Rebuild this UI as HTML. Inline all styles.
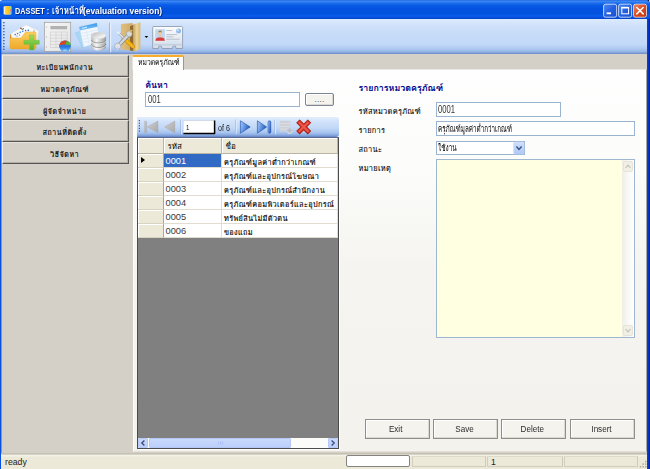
<!DOCTYPE html>
<html lang="th">
<head>
<meta charset="utf-8">
<title>DASSET</title>
<style>
html,body{margin:0;padding:0;}
body{width:650px;height:469px;overflow:hidden;position:relative;background:#d4d0c8;
 font-family:"Liberation Sans","Loma","Tahoma",sans-serif;font-size:9px;color:#000;}
.abs{position:absolute;}
#frame{left:0;top:0;width:650px;height:469px;background:linear-gradient(to right,#0a50dc 0,#0a50dc 640px,#0a44d4 647px,#0530bc 649px,#00189c 650px);}
#title{left:0;top:0;width:650px;height:19px;
 background:linear-gradient(to bottom,#1e62dc 0,#3f8cf6 6%,#2274ee 14%,#0a5ce6 26%,#0353e0 45%,#0252de 70%,#0a5cea 84%,#0650dc 93%,#0440c4 100%);}
#ttext{left:15.4px;top:3.5px;height:14px;line-height:14px;color:#fff;font-weight:bold;font-size:9.3px;white-space:nowrap;text-shadow:1px 1px 0 #0a2a80;}
#ttext span{position:absolute;top:0;transform-origin:0 50%;}
#t1{left:-0.5px;transform:scaleX(0.785);}
#t2{left:36.3px;transform:scaleX(0.85);}
#t3{left:67.7px;transform:scaleX(0.9);}
#toolbar{left:1px;top:19px;width:646px;height:35px;
 background:linear-gradient(to bottom,#dceafc 0,#cfe1fa 20%,#c6dbf8 45%,#c3d9f8 72%,#b0caf1 84%,#97b6e8 93%,#7f9ed6 97%,#6c8bc4 100%);}
#client{left:1px;top:54px;width:646px;height:400px;background:#d4d0c8;}
.lbtn{left:2px;width:127px;box-sizing:border-box;background:#d5d1c9;border:1px solid;border-color:#e6e3dc #565450 #565450 #f4f2ec;box-shadow:inset -1px -1px 0 #b4b0a8;text-align:center;padding-right:2px;font-weight:bold;font-size:7.6px;letter-spacing:0.22px;color:#1a1a1a;white-space:nowrap;}
#tabpage{left:133px;top:69px;width:514px;height:383px;box-sizing:border-box;border:1px solid #a4a8a4;border-top-color:#e9e8e4;border-left-color:#fdfdfb;border-bottom-color:#e2e0d8;
 background:linear-gradient(to bottom,#fefefe 0,#fcfcfb 25%,#f8f8f5 40%,#f5f4f0 52%,#f3f2ed 100%);}
#tab{left:132px;top:55px;width:52px;height:15px;box-sizing:border-box;background:#fdfdfd;border:1px solid #919b9c;border-left-color:#e4e3de;border-bottom:none;border-top:2px solid #f7ae2c;border-radius:2px 2px 0 0;
 font-size:8px;line-height:11.5px;text-align:left;padding-left:4.600px;white-space:nowrap;}
.nav{color:#00008b;font-weight:bold;white-space:nowrap;}
.lab{white-space:nowrap;font-size:7.4px;letter-spacing:0.3px;color:#000;-webkit-text-stroke:0.1px #333;}
.inp{box-sizing:border-box;border:1px solid #9ab3ce;background:#fff;font-size:9px;line-height:12px;padding-left:2px;color:#333;white-space:nowrap;overflow:hidden;}
.btn{box-sizing:border-box;border:1px solid #8e8e8a;background:#f4f3ee;box-shadow:inset -1px -1px 0 #dcdad0, inset 1px 1px 0 #fff;text-align:center;font-size:9.2px;color:#2a2a2a;line-height:19.5px;height:20px;top:419px;width:65px;padding-right:3px;}
.btn span{display:inline-block;transform:scaleX(0.88);}
#status{left:1px;top:453px;width:646px;height:16px;background:linear-gradient(to bottom,#c4c1b3 0,#c4c1b3 1px,#d6d3c5 1px,#d6d3c5 2px,#f3f2e9 2px,#f3f2e9 3px,#efede0 3px,#efede0 4px,#ece9d8 4px,#ece9d8 100%);}
.sp{top:456px;height:11px;box-sizing:border-box;border:1px solid;border-color:#dedbca #cdcab9 #d0cdbc #d2cfbe;}

#navbar{left:137px;top:117px;width:202px;height:20px;border-radius:0 3px 3px 0;
 background:linear-gradient(to bottom,#e2edfc 0,#d0e1fa 25%,#c2d8f7 55%,#a9c5ef 78%,#8aabe2 90%,#6c8ed0 97%,#5c7ec4 100%);}
#grid{left:137px;top:137px;width:202px;height:312px;box-sizing:border-box;background:#808080;border:1px solid #4c4c4c;border-top-color:#5c6a8c;box-shadow:1px 1px 0 #fff;}
.gh{box-sizing:border-box;background:#ece9d8;border-right:1px solid #b8b5a4;border-bottom:1px solid #b8b5a4;box-shadow:inset 1px 1px 0 #fff;font-size:8px;line-height:17px;padding-left:3.5px;white-space:nowrap;overflow:hidden;}
.gr{box-sizing:border-box;background:#ece9d8;border-right:1px solid #aca899;border-bottom:1px solid #d8d4c2;box-shadow:inset 1px 1px 0 #fff;}
.gr i{position:absolute;left:3px;top:3px;width:0;height:0;border-left:4px solid #000;border-top:3.5px solid transparent;border-bottom:3.5px solid transparent;}
.gc{box-sizing:border-box;background:#fff;border-right:1px solid #e0ddd0;border-bottom:1px solid #e0ddd0;padding-left:2px;color:#3a3a3a;white-space:nowrap;overflow:hidden;}
.gc.sel{background:#316ac5;color:#fff;}
.sbb{box-sizing:border-box;background:linear-gradient(to bottom,#c9d9fc,#bccffa);border:1px solid #b4c8f6;border-radius:1px;}
.sbd{box-sizing:border-box;background:#f1efe6;border:1px solid #e6e4d8;border-radius:2px;}
.sx{display:inline-block;transform-origin:0 50%;white-space:nowrap;}
</style>
</head>
<body>
<div id="frame" class="abs"></div>
<div id="title" class="abs"></div>
<div id="ttext" class="abs"><span class="sx" id="t1">DASSET : </span><span class="sx" id="t2">เจ้าหน้าที่</span><span class="sx" id="t3">(evaluation version)</span></div>

<svg class="abs" style="left:0;top:0" width="650" height="19" viewBox="0 0 650 19">
<defs>
<linearGradient id="gWb" x1="0" y1="0" x2="1" y2="1"><stop offset="0" stop-color="#4c8af4"/><stop offset="0.5" stop-color="#2560e2"/><stop offset="1" stop-color="#1c50cc"/></linearGradient>
<linearGradient id="gWc" x1="0" y1="0" x2="1" y2="1"><stop offset="0" stop-color="#ee8a68"/><stop offset="0.5" stop-color="#dc4c22"/><stop offset="1" stop-color="#b8360e"/></linearGradient>
<linearGradient id="gApp" x1="0" y1="0" x2="1" y2="0"><stop offset="0" stop-color="#ffd840"/><stop offset="1" stop-color="#f4b818"/></linearGradient>
<filter id="b4"><feGaussianBlur stdDeviation="0.3"/></filter>
</defs>
<g filter="url(#b4)">
<rect x="3.600" y="6.200" width="7.800" height="8.200" rx="0.700" fill="#f6ecc8"/><rect x="5" y="6.200" width="5.200" height="8.200" fill="url(#gApp)"/><rect x="10.200" y="6.800" width="1.200" height="2.200" fill="#8cd060"/><rect x="10.200" y="9.200" width="1.200" height="2.200" fill="#e06a40"/><rect x="10.200" y="11.600" width="1.200" height="2.200" fill="#6aa8e8"/>
<rect x="0" y="0" width="1.400" height="1" fill="#e8eefc"/><rect x="647.800" y="0" width="1.300" height="1.300" fill="#0a1430"/><rect x="649" y="0" width="1" height="1.600" fill="#d0d0c8"/>
<rect x="603.6" y="4.2" width="13" height="13" rx="1.8" fill="url(#gWb)" stroke="#e6eefc" stroke-width="0.8"/>
<rect x="606.6" y="12.4" width="4.4" height="1.8" fill="#fff"/>
<rect x="618.6" y="4.2" width="13" height="13" rx="1.8" fill="url(#gWb)" stroke="#e6eefc" stroke-width="0.8"/>
<rect x="621.8" y="7.4" width="6.8" height="6.4" fill="none" stroke="#fff" stroke-width="1"/><rect x="621.3" y="6.9" width="7.8" height="1.6" fill="#fff"/>
<rect x="633.5" y="4.2" width="13" height="13" rx="1.8" fill="url(#gWc)" stroke="#f4e4dc" stroke-width="0.8"/>
<path d="M636.8 7.5 l6.4 6.4 M643.2 7.5 l-6.400000000000091 6.4" stroke="#fff" stroke-width="1.5" stroke-linecap="round"/>
</g>
</svg>
<div id="toolbar" class="abs"></div>
<div id="client" class="abs"></div>
<div class="abs" style="left:1px;top:19px;width:1px;height:450px;background:rgba(10,80,220,0.45)"></div>

<svg class="abs" style="left:0;top:0" width="650" height="60" viewBox="0 0 650 60">
<defs>
 <linearGradient id="gFold" x1="0" y1="0" x2="0" y2="1"><stop offset="0" stop-color="#fcd063"/><stop offset="1" stop-color="#eea92a"/></linearGradient>
 <linearGradient id="gPlus" x1="0" y1="0" x2="0" y2="1"><stop offset="0" stop-color="#9be05a"/><stop offset="1" stop-color="#4fb22a"/></linearGradient>
 <linearGradient id="gSheet" x1="0" y1="0" x2="1" y2="1"><stop offset="0" stop-color="#f6f6f6"/><stop offset="1" stop-color="#e4e4e4"/></linearGradient>
 <linearGradient id="gDb" x1="0" y1="0" x2="1" y2="0"><stop offset="0" stop-color="#b8b8b8"/><stop offset="0.35" stop-color="#f6f6f6"/><stop offset="1" stop-color="#9a9a9a"/></linearGradient>
 <linearGradient id="gDbTop" x1="0" y1="0" x2="1" y2="1"><stop offset="0" stop-color="#b4b4b4"/><stop offset="0.6" stop-color="#e8e8e8"/><stop offset="1" stop-color="#ffffff"/></linearGradient>
 <linearGradient id="gTan" x1="0" y1="0" x2="1" y2="0"><stop offset="0" stop-color="#e0c080"/><stop offset="1" stop-color="#cfa860"/></linearGradient>
 <linearGradient id="gTan2" x1="0" y1="0" x2="1" y2="0"><stop offset="0" stop-color="#c9a25a"/><stop offset="0.5" stop-color="#ecd49a"/><stop offset="1" stop-color="#d8b670"/></linearGradient>
 <linearGradient id="gBlueTop" x1="0" y1="0" x2="0" y2="1"><stop offset="0" stop-color="#3a98ec"/><stop offset="1" stop-color="#80c6f8"/></linearGradient>
 <linearGradient id="gPie" x1="0" y1="0" x2="0" y2="1"><stop offset="0" stop-color="#2a6fd0"/><stop offset="0.5" stop-color="#2672dc"/><stop offset="1" stop-color="#6cbcfa"/></linearGradient>
 <linearGradient id="gCard" x1="0" y1="0" x2="0" y2="1"><stop offset="0" stop-color="#fbfcfd"/><stop offset="1" stop-color="#d5dde8"/></linearGradient>
 <filter id="b3"><feGaussianBlur stdDeviation="0.35"/></filter>
</defs>
<g filter="url(#b3)">
<!-- grip -->
<g fill="#2c4f9e">
<rect x="3.2" y="22" width="1.3" height="1.3"/><rect x="3.2" y="25" width="1.3" height="1.3"/><rect x="3.2" y="28" width="1.3" height="1.3"/><rect x="3.2" y="31" width="1.3" height="1.3"/><rect x="3.2" y="34" width="1.3" height="1.3"/><rect x="3.2" y="37" width="1.3" height="1.3"/><rect x="3.2" y="40" width="1.3" height="1.3"/><rect x="3.2" y="43" width="1.3" height="1.3"/><rect x="3.2" y="46" width="1.3" height="1.3"/><rect x="3.2" y="48.6" width="1.3" height="1.3"/>
</g>
<!-- icon 1: folder plus -->
<polygon points="10,34.6 11.6,33.6 12,39 10,39" fill="#d88a1a"/><polygon points="10.8,33.8 25.9,25 38.6,30.8 37.4,40 12,40" fill="#f8f8f8" stroke="#dcdcdc" stroke-width="0.4"/><polygon points="19,29.4 26.4,25.6 31,27.6 24,31.6" fill="#fff"/>
<g fill="#2f78d8"><circle cx="15.2" cy="34.6" r="0.8"/><circle cx="17.6" cy="33.5" r="0.8"/><circle cx="20.2" cy="32.3" r="0.8"/><circle cx="22.8" cy="31.3" r="0.8"/><circle cx="25.600" cy="30.6" r="0.8"/><circle cx="28.3" cy="30.4" r="0.8"/><circle cx="17" cy="36" r="0.6"/><circle cx="19.6" cy="35" r="0.6"/></g><circle cx="34" cy="31" r="0.7" fill="#8a8f98"/>
<path d="M20.2 28.2 l2.6 1.2 l1.2 -1" stroke="#3a3a3a" stroke-width="0.9" fill="none"/><path d="M20.400 28 l1.2 0.400" stroke="#c83a2a" stroke-width="0.8"/>
<path d="M10 39.4 q0 -1.400 1.400 -1.400 h9.600 l4.600 -6 h9.100 q1.400 0 1.400 1.400 v14.200 q0 1.400 -1.400 1.400 h-23.300 q-1.400 0 -1.400 -1.400 z" fill="url(#gFold)" stroke="#e8a020" stroke-width="0.4"/>
<path d="M29.600 34.900 h4.300 v5.400 h5.400 v4 h-5.400 v5.700 h-4.300 v-5.700 h-5.700 v-4 h5.700 z" fill="url(#gPlus)" stroke="#62b838" stroke-width="0.4" opacity="0.95"/>
<!-- icon 2: sheet + pie -->
<rect x="44.4" y="22.3" width="26.3" height="29" fill="url(#gSheet)" stroke="#9c9c9c" stroke-width="0.7"/>
<rect x="50.4" y="26" width="16.7" height="3.3" fill="#b2b2b2"/>
<g stroke="#c4c4c4" stroke-width="0.5" fill="none">
<rect x="50.4" y="32" width="16.7" height="15.5"/>
<path d="M50.4 35.1 h16.7 M50.4 38.2 h16.7 M50.4 41.3 h16.7 M50.4 44.4 h16.7 M56 32 v15.5 M61.5 32 v15.5"/>
</g>
<circle cx="46.6" cy="27" r="0.5" fill="#999"/><circle cx="46.6" cy="37" r="0.5" fill="#999"/><circle cx="46.6" cy="47" r="0.5" fill="#999"/>
<circle cx="65" cy="46.2" r="5.8" fill="url(#gPie)"/>
<path d="M65 45.4 L59.260 45.4 A5.8 5.8 0 0 1 67 40.76 z" fill="#d6442a"/>
<path d="M64.6 45.4 L67 40.76 A5.8 5.8 0 0 1 70.740 45.4 z" fill="#52b82c"/>
<ellipse cx="65" cy="46" rx="5.8" ry="1.5" fill="#2a74e0"/><ellipse cx="65" cy="50.300" rx="2.2" ry="0.8" fill="#c8e8ff" opacity="0.7"/>
<!-- icon 3: sheets + db -->
<polygon points="75.5,33 90,28 96,44 82.600,48" fill="#a8d8f6" stroke="#8cc0e8" stroke-width="0.4"/>
<polygon points="79.1,26.9 96.8,23 100.4,42 83.6,47.2" fill="#f0f6fc" stroke="#b4cee8" stroke-width="0.4"/>
<polygon points="79.1,26.9 96.8,23 97.5,26.700 79.9,30.600" fill="url(#gBlueTop)"/><path d="M82 28.300 l5 -1.100" stroke="#e8f4fe" stroke-width="0.9"/>
<path d="M81.5 33.400 l16 -3.500 M82.200 36.400 l16 -3.500 M82.900 39.400 l16 -3.500 M83.600 42.400 l16 -3.500 M86.400 31 l2.800 14 M91.400 30 l2.800 14" stroke="#d0e0f0" stroke-width="0.45"/>
<path d="M91.300 35.500 v11.800 a7.300 3.200 0 0 0 14.600 0 v-11.800 z" fill="url(#gDb)"/>
<ellipse cx="98.600" cy="35.500" rx="7.300" ry="3.200" fill="url(#gDbTop)" stroke="#d8d8d8" stroke-width="0.5"/>
<path d="M91.300 39.800 a7.300 3.200 0 0 0 14.600 0 M91.300 44.300 a7.300 3.200 0 0 0 14.600 0" stroke="#7e7e7e" stroke-width="0.8" fill="none"/><path d="M91.300 40.700 a7.300 3.200 0 0 0 14.600 0 M91.300 45.200 a7.300 3.200 0 0 0 14.600 0" stroke="#fbfbfb" stroke-width="0.6" fill="none" opacity="0.8"/>
<!-- separator -->
<rect x="109.3" y="22.600" width="0.8" height="29.600" fill="#88a4dc"/><rect x="110.2" y="22.600" width="0.9" height="29.600" fill="#f2f6fd"/>
<!-- icon 4: folder + tools -->
<polygon points="120.9,24 132.5,22.900 132.5,50.400 120.9,49.400" fill="url(#gTan)"/>
<polygon points="130,26.500 133.600,24.600 133.600,51 130,50.400" fill="#8c6a30"/>
<polygon points="133.100,24.700 140.400,22.200 140.400,49 133.100,51.900" fill="url(#gTan2)"/>
<path d="M118.400 32.800 L126 40.200" stroke="#8a9098" stroke-width="2.300" stroke-linecap="round"/><path d="M118.400 32.800 L126 40.200" stroke="#e4e7ea" stroke-width="1.400" stroke-linecap="round"/><circle cx="118.300" cy="32.600" r="1.300" fill="#f4f5f6"/>
<path d="M126.200 40.400 L133 46.600" stroke="#c88408" stroke-width="4" stroke-linecap="round"/><path d="M126.200 40.400 L133 46.600" stroke="#f4b414" stroke-width="2.800" stroke-linecap="round"/>
<path d="M118 46 L129 34.400" stroke="#7c848e" stroke-width="3.600" stroke-linecap="round"/><path d="M118 46 L129 34.400" stroke="#d4d8dd" stroke-width="2.500" stroke-linecap="round"/>
<circle cx="129.300" cy="33.800" r="2.900" fill="#d8dce0" stroke="#8a929c" stroke-width="0.500"/><polygon points="129.500,33.400 133,30.400 130.600,29.400" fill="#d9ba78"/>
<circle cx="117.700" cy="46.200" r="3.100" fill="#dfe2e6" stroke="#8a929c" stroke-width="0.500"/><polygon points="117.600,46.800 115.200,50.400 118.600,50.400" fill="#b4ccf0"/>
<!-- dropdown arrow -->
<polygon points="144.6,36 148.2,36 146.4,38" fill="#000"/>
<!-- icon 5: id card -->
<path d="M153.800 26.500 h27.700 q1.100 0 1.100 1.100 v20.900 h-6.600 l-0.600 -2.600 h-2.200 l-0.800 2.600 h-10.400 l-0.800 -2.600 h-2.200 l-0.600 2.600 h-5.700 v-20.900 q0 -1.100 1.100 -1.100 z" fill="url(#gCard)" stroke="#8794a8" stroke-width="0.800"/>
<rect x="155.200" y="29.200" width="9.700" height="11.600" fill="#bfd8f2"/>
<ellipse cx="160.100" cy="33.400" rx="1.900" ry="2.300" fill="#edc9a0"/><rect x="159.400" y="35.200" width="1.400" height="2.600" fill="#e8c096"/>
<path d="M158.300 32.600 q0 -2.200 1.800 -2.200 q1.800 0 1.800 2.200 q-1.800 -1 -3.600 0z" fill="#a87c44"/>
<path d="M155.400 40.800 q0.200 -3.200 3.400 -3.300 h2.600 q3.200 0.100 3.400 3.300 z" fill="#dc3a36"/>
<g stroke="#9aa2b0" stroke-width="0.700" opacity="0.85"><path d="M166.400 30.500 h5.800 M166.400 34.600 h10.600 M166.400 36.800 h7 M166.400 39.200 h13.400"/></g><path d="M167 42 h13" stroke="#d4e2f2" stroke-width="1.200"/>
<circle cx="178.600" cy="30.900" r="2.500" fill="#8ebcec"/><circle cx="178" cy="30.300" r="1" fill="#cfe4f8"/>
<rect x="154.200" y="43.800" width="28" height="1.700" fill="#c2d0e2"/>
</g>
</svg>


<div class="abs lbtn" style="top:55px;height:22px;line-height:24px">ทะเบียนพนักงาน</div>
<div class="abs lbtn" style="top:77px;height:22px;line-height:24px">หมวดครุภัณฑ์</div>
<div class="abs lbtn" style="top:99px;height:21px;line-height:23px">ผู้จัดจำหน่าย</div>
<div class="abs lbtn" style="top:120px;height:22px;line-height:24px">สถานที่ติดตั้ง</div>
<div class="abs lbtn" style="top:142px;height:22px;line-height:24px">วิธีจัดหา</div>

<div id="tabpage" class="abs"></div>
<div id="tab" class="abs"><span class="sx" style="transform:scaleX(0.845)">หมวดครุภัณฑ์</span></div>

<div class="abs nav" style="left:145.2px;top:79px;font-size:8.8px;line-height:12px">ค้นหา</div>
<div class="abs inp" style="left:145px;top:92px;width:155px;height:15px;line-height:13.5px;font-size:10.2px;padding-left:1.5px"><span class="sx" style="transform:scaleX(0.75)">001</span></div>
<div class="abs btn" style="left:305px;top:93px;width:29px;height:13px;line-height:12px;border-radius:2px;border-color:#7a8698;font-size:8px;letter-spacing:0.3px;color:#333;padding-right:0">....</div>

<div class="abs nav" style="left:358.5px;top:82px;font-size:8.9px;line-height:12px">รายการหมวดครุภัณฑ์</div>
<div class="abs lab" style="left:358.5px;top:105.5px;line-height:12px">รหัสหมวดครุภัณฑ์</div>
<div class="abs lab" style="left:358.5px;top:124.5px;line-height:12px">รายการ</div>
<div class="abs lab" style="left:358.5px;top:143.5px;line-height:12px">สถานะ</div>
<div class="abs lab" style="left:358.5px;top:162.5px;line-height:12px">หมายเหตุ</div>
<div class="abs inp" style="left:436px;top:102px;width:125px;height:15px;line-height:13.5px;font-size:10.2px;padding-left:1px"><span class="sx" style="transform:scaleX(0.75)">0001</span></div>
<div class="abs inp" style="left:436px;top:121px;width:199px;height:15px;line-height:14px;font-size:9.2px;color:#000;padding-left:1px"><span class="sx" style="transform:scaleX(0.685)">ครุภัณฑ์มูลค่าต่ำกว่าเกณฑ์</span></div>
<div class="abs inp" style="left:436px;top:141px;width:89px;height:14px;line-height:13px;font-size:9.2px;color:#000;padding-left:1px"><span class="sx" style="transform:scaleX(0.7)">ใช้งาน</span></div>
<div class="abs inp" style="left:436px;top:159px;width:199px;height:179px;background:#ffffe1;border-color:#9fb6d0"></div>

<div id="navbar" class="abs"></div>
<svg class="abs" style="left:130px;top:110px" width="220" height="30" viewBox="130 110 220 30">
<defs>
<linearGradient id="gNb" x1="0" y1="0.2" x2="1" y2="0.6"><stop offset="0" stop-color="#a4c4f2"/><stop offset="0.45" stop-color="#6496e2"/><stop offset="1" stop-color="#1c4cac"/></linearGradient>
<linearGradient id="gGr" x1="0" y1="0" x2="1" y2="1"><stop offset="0" stop-color="#d0d0d0"/><stop offset="1" stop-color="#a8a8a8"/></linearGradient>
<linearGradient id="gRx" x1="0" y1="0" x2="0" y2="1"><stop offset="0" stop-color="#f06a5a"/><stop offset="1" stop-color="#c8201c"/></linearGradient>
<filter id="b5"><feGaussianBlur stdDeviation="0.3"/></filter>
</defs>
<g filter="url(#b5)">
<g fill="#3b5aa6"><rect x="138.8" y="120" width="1.2" height="1.2"/><rect x="138.8" y="122.6" width="1.2" height="1.2"/><rect x="138.8" y="125.2" width="1.2" height="1.2"/><rect x="138.8" y="127.8" width="1.2" height="1.2"/><rect x="138.8" y="130.4" width="1.2" height="1.2"/></g>
<rect x="144.4" y="121" width="2.2" height="11.8" rx="0.8" fill="url(#gGr)" stroke="#a0a0a0" stroke-width="0.3"/>
<polygon points="158,121 158,132.8 147.2,127" fill="url(#gGr)" stroke="#a4a4a4" stroke-width="0.4"/>
<polygon points="174.8,121 174.8,132.8 164.6,127" fill="url(#gGr)" stroke="#a4a4a4" stroke-width="0.4"/>
<rect x="180.4" y="119.6" width="0.8" height="14.6" fill="#8fafe0"/><rect x="181.2" y="119.6" width="0.7" height="14.6" fill="#eef4fd"/>
<rect x="235" y="119.6" width="0.8" height="14.6" fill="#8fafe0"/><rect x="235.8" y="119.6" width="0.7" height="14.6" fill="#eef4fd"/>
<polygon points="240.4,120.8 240.4,133.2 250.2,127" fill="url(#gNb)" stroke="#2c5cb4" stroke-width="0.7" stroke-linejoin="round"/>
<polygon points="257.4,120.8 257.4,133.2 266.6,127" fill="url(#gNb)" stroke="#2c5cb4" stroke-width="0.7" stroke-linejoin="round"/>
<rect x="268" y="120.8" width="2.8" height="12.4" rx="1.2" fill="url(#gNb)" stroke="#2c5cb4" stroke-width="0.6"/>
<rect x="274.5" y="119.6" width="0.8" height="14.6" fill="#8fafe0"/><rect x="275.3" y="119.6" width="0.7" height="14.6" fill="#eef4fd"/>
<rect x="279.8" y="120.8" width="10.6" height="11" fill="#cdd1d7"/><path d="M279.8 123.6 h10.6 M279.8 126.4 h10.6 M279.8 129.2 h10.6" stroke="#e2e6ec" stroke-width="0.6"/>
<path d="M289.6 127.2 v6.8 M286.2 130.6 h6.8" stroke="#d8e4f6" stroke-width="3.4"/><path d="M289.6 127.6 v6 M286.6 130.6 h6" stroke="#b9bec6" stroke-width="2"/>
<path d="M299.6 122.8 L307.8 131 M307.8 122.800 L299.6 131" stroke="#a01810" stroke-width="4.8" stroke-linecap="square"/>
<path d="M299.6 122.8 L307.8 131 M307.8 122.800 L299.6 131" stroke="#d63428" stroke-width="3.7" stroke-linecap="square"/>
<path d="M299.6 122.8 L307.8 131 M307.8 122.800 L299.6 131" stroke="#ea5a4c" stroke-width="1.8" stroke-linecap="square"/>
</g>
</svg>
<svg class="abs" style="left:180px;top:118px" width="40" height="20" viewBox="180 118 40 20"><rect x="183" y="120.2" width="32" height="13.6" fill="#fff"/><path d="M183.300 134 V120.5 H215" stroke="#b8c4d8" stroke-width="0.6" fill="none"/><path d="M183.400 133.6 H214.6 V120.6" stroke="#000" stroke-width="1.5" fill="none" stroke-linejoin="round"/></svg>
<div class="abs" style="left:185.500px;top:121.500px;font-size:7.6px;line-height:12px;color:#111"><span class="sx" style="transform:scaleX(0.8)">1</span></div>
<div class="abs" style="left:218px;top:121.5px;font-size:8.3px;line-height:12px;color:#222"><span class="sx" style="transform:scaleX(0.86)">of 6</span></div>
<div id="grid" class="abs"></div>
<div class="abs gh" style="left:138px;top:138px;width:26px;height:16px"></div>
<div class="abs gh" style="left:164px;top:138px;width:58px;height:16px"><span>รหัส</span></div>
<div class="abs gh" style="left:222px;top:138px;width:116px;height:16px"><span>ชื่อ</span></div>
<!--ROWS-->
<div class="abs gr" style="left:138px;top:154px;width:26px;height:14px"><i></i></div>
<div class="abs gc sel" style="left:164px;top:154px;width:58px;height:14px;line-height:14px;font-size:9.3px;padding-left:1.5px">0001</div>
<div class="abs gc" style="left:222px;top:154px;width:116px;height:14px;line-height:17px;font-size:7.3px;letter-spacing:0.36px;-webkit-text-stroke:0.15px #222;color:#000;padding-left:2px">ครุภัณฑ์มูลค่าต่ำกว่าเกณฑ์</div>
<div class="abs gr" style="left:138px;top:168px;width:26px;height:14px"></div>
<div class="abs gc" style="left:164px;top:168px;width:58px;height:14px;line-height:14px;font-size:9.3px;padding-left:1.5px">0002</div>
<div class="abs gc" style="left:222px;top:168px;width:116px;height:14px;line-height:17px;font-size:7.3px;letter-spacing:0.36px;-webkit-text-stroke:0.15px #222;color:#000;padding-left:2px">ครุภัณฑ์และอุปกรณ์โฆษณา</div>
<div class="abs gr" style="left:138px;top:182px;width:26px;height:14px"></div>
<div class="abs gc" style="left:164px;top:182px;width:58px;height:14px;line-height:14px;font-size:9.3px;padding-left:1.5px">0003</div>
<div class="abs gc" style="left:222px;top:182px;width:116px;height:14px;line-height:17px;font-size:7.3px;letter-spacing:0.36px;-webkit-text-stroke:0.15px #222;color:#000;padding-left:2px">ครุภัณฑ์และอุปกรณ์สำนักงาน</div>
<div class="abs gr" style="left:138px;top:196px;width:26px;height:14px"></div>
<div class="abs gc" style="left:164px;top:196px;width:58px;height:14px;line-height:14px;font-size:9.3px;padding-left:1.5px">0004</div>
<div class="abs gc" style="left:222px;top:196px;width:116px;height:14px;line-height:17px;font-size:7.3px;letter-spacing:0.36px;-webkit-text-stroke:0.15px #222;color:#000;padding-left:2px">ครุภัณฑ์คอมพิวเตอร์และอุปกรณ์</div>
<div class="abs gr" style="left:138px;top:210px;width:26px;height:14px"></div>
<div class="abs gc" style="left:164px;top:210px;width:58px;height:14px;line-height:14px;font-size:9.3px;padding-left:1.5px">0005</div>
<div class="abs gc" style="left:222px;top:210px;width:116px;height:14px;line-height:17px;font-size:7.3px;letter-spacing:0.36px;-webkit-text-stroke:0.15px #222;color:#000;padding-left:2px">ทรัพย์สินไม่มีตัวตน</div>
<div class="abs gr" style="left:138px;top:224px;width:26px;height:14px"></div>
<div class="abs gc" style="left:164px;top:224px;width:58px;height:14px;line-height:14px;font-size:9.3px;padding-left:1.5px">0006</div>
<div class="abs gc" style="left:222px;top:224px;width:116px;height:14px;line-height:17px;font-size:7.3px;letter-spacing:0.36px;-webkit-text-stroke:0.15px #222;color:#000;padding-left:2px">ของแถม</div>
<!--/ROWS-->
<div class="abs" style="left:138px;top:438px;width:200px;height:10px;background:#fbfbf9"></div>
<div class="abs sbb" style="left:138px;top:438px;width:10px;height:10px"></div>
<div class="abs sbb" style="left:328px;top:438px;width:10px;height:10px"></div>
<div class="abs sbb" style="left:149px;top:438px;width:142px;height:10px"></div>
<svg class="abs" style="left:138px;top:438px" width="200" height="10" viewBox="0 0 200 10"><path d="M6.4 2.4 L3.8 5 L6.4 7.6 M193.6 2.4 L196.2 5 L193.6 7.6" stroke="#3d4f80" stroke-width="1.4" fill="none"/><path d="M80.500 3.5 v3 M82.500 3.5 v3 M84.500 3.5 v3" stroke="#9cb8f0" stroke-width="0.7"/></svg>
<div class="abs" style="left:622px;top:160px;width:12px;height:177px;background:linear-gradient(to right,#efeee8,#fafaf8 60%,#fefefe)"></div>
<div class="abs sbd" style="left:623px;top:161px;width:10px;height:11px"></div>
<div class="abs sbd" style="left:623px;top:325px;width:10px;height:11px"></div>
<svg class="abs" style="left:623px;top:161px" width="10" height="176" viewBox="0 0 10 176"><path d="M2.6 6.8 L5 4.2 L7.4 6.8 M2.6 168.2 L5 170.8 L7.4 168.2" stroke="#c4c2b6" stroke-width="1.2" fill="none"/></svg>
<div class="abs" style="left:514px;top:142px;width:10px;height:12px;border-radius:1.5px;background:linear-gradient(to bottom,#cfe0fc,#b0c8f6);box-shadow:0 0 0 0.5px #b4c8ee"></div>
<svg class="abs" style="left:514px;top:142px" width="10" height="12" viewBox="0 0 10 12"><path d="M2.4 4.6 L5 7.4 L7.6 4.6" stroke="#3a5488" stroke-width="1.5" fill="none"/></svg>
<div class="abs btn" style="left:365px"><span>Exit</span></div>
<div class="abs btn" style="left:433px"><span>Save</span></div>
<div class="abs btn" style="left:501px"><span>Delete</span></div>
<div class="abs btn" style="left:570px"><span>Insert</span></div>

<div id="status" class="abs"></div>
<div class="abs" style="left:5px;top:457px;font-size:8.7px;line-height:11px;color:#1a1a1a">ready</div>
<div class="abs" style="left:491px;top:457px;font-size:8.6px;line-height:11px;color:#222">1</div>

<div class="abs" style="left:346px;top:455px;width:64px;height:12px;box-sizing:border-box;border:1px solid #848484;border-radius:2px;background:#fff"></div>
<div class="abs sp" style="left:412px;width:74px"></div>
<div class="abs sp" style="left:487px;width:76px"></div>
<div class="abs sp" style="left:564px;width:74px"></div>
<svg class="abs" style="left:638.5px;top:460px" width="10" height="10" viewBox="0 0 10 10"><g fill="#a6a290"><rect x="6" y="6" width="1.4" height="1.4"/><rect x="3.4" y="6" width="1.4" height="1.4"/><rect x="6" y="3.4" width="1.4" height="1.4"/><rect x="0.8" y="6" width="1.4" height="1.4"/><rect x="6" y="0.8" width="1.4" height="1.4"/><rect x="3.4" y="3.4" width="1.4" height="1.4"/></g></svg>
</body>
</html>
